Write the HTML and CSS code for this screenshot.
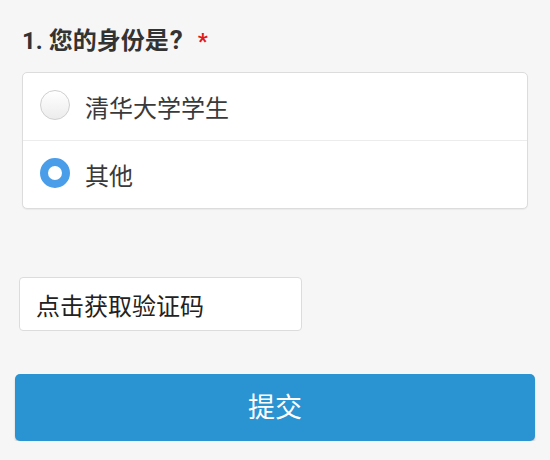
FILE: index.html
```html
<!DOCTYPE html>
<html lang="zh">
<head>
<meta charset="utf-8">
<link rel="stylesheet" href="styles.css">
</head>
<body>
<div class="page">
  <h2 class="title">1. 您的身份是<span class="q">?</span><span class="req">*</span></h2>
  <div class="card">
    <label class="option">
      <span class="radio"></span>
      <span class="label">清华大学学生</span>
    </label>
    <label class="option">
      <span class="radio checked"></span>
      <span class="label">其他</span>
    </label>
  </div>
  <div class="code-box">点击获取验证码</div>
  <button class="submit">提交</button>
</div>
</body>
</html>
```

FILE: styles.css
```css
html, body {
  margin: 0;
  padding: 0;
  background: #f6f6f6;
}
body {
  font-family: "Noto Sans CJK SC", "Noto Sans", sans-serif;
  color: #333;
}
.page {
  padding-top: 20px;
  display: flex;
  flex-direction: column;
}
.title {
  margin: 0 0 0 22px;
  font-size: 24px;
  line-height: 40px;
  height: 40px;
  font-weight: bold;
  color: #333;
  font-family: "Roboto", "Noto Sans CJK SC", sans-serif;
}
.q {
  font-size: 26px;
  margin-left: 1px;
}
.req {
  color: #e0191b;
  margin-left: 15px;
  font-size: 22px;
}
.card {
  margin: 12px 0 0 22px;
  width: 506px;
  box-sizing: border-box;
  background: #fff;
  border: 1px solid #dcdcdc;
  border-radius: 5px;
  box-shadow: 0 1px 1px rgba(0,0,0,0.05);
}
.option {
  display: flex;
  align-items: center;
  height: 67px;
  padding-left: 17px;
  gap: 15px;
}
.option + .option {
  border-top: 1px solid #ececec;
}
.radio {
  width: 30px;
  height: 30px;
  box-sizing: border-box;
  border-radius: 50%;
  border: 1px solid #cfcfcf;
  background: linear-gradient(#ffffff, #ececec);
  margin-bottom: 4px;
}
.radio.checked {
  border: 8px solid #4a9de9;
  background: #fff;
}
.label {
  font-size: 24px;
  color: #3a3a3a;
  line-height: 30px;
}
.code-box {
  margin: 68px 0 0 19px;
  width: 283px;
  height: 54px;
  box-sizing: border-box;
  background: #fff;
  border: 1px solid #dcdcdc;
  border-radius: 4px;
  padding-left: 16px;
  display: flex;
  align-items: center;
  font-size: 24px;
  color: #222;
}
.submit {
  margin: 43px 0 0 15px;
  width: 520px;
  height: 67px;
  border: none;
  border-radius: 5px;
  background: #2a93d1;
  color: #fff;
  font-family: "Noto Sans CJK SC", sans-serif;
  font-size: 27px;
  box-shadow: 0 2px 2px rgba(0,0,0,0.18);
  padding: 0 0 4px;
}
```
